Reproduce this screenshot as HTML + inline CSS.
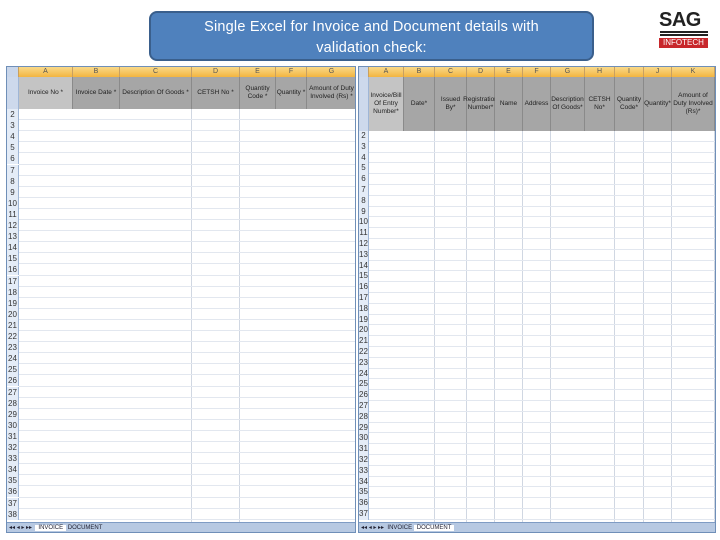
<!DOCTYPE html>
<html><head><meta charset="utf-8"><style>
*{margin:0;padding:0;box-sizing:border-box}
html,body{width:720px;height:540px;overflow:hidden}
body{background:#fff;position:relative;font-family:"Liberation Sans",sans-serif}
.a{position:absolute}
.title{left:149px;top:11px;width:445px;height:50px;background:#4f81bd;border:2px solid #3a5f8c;border-radius:8px;color:#fff;font-size:14.5px;text-align:center;line-height:21px;padding-top:4px;letter-spacing:.2px}
.sheet{border:1px solid #6f8fb8;background:#fff;overflow:hidden}
.colh{background:linear-gradient(#f9d98a,#f3b540);font-size:7px;color:#555;text-align:center;line-height:10px;border-right:1px solid #c9a060;height:10px}
.hd{background:#a6a6a6;font-size:6.5px;color:#222;display:flex;align-items:center;justify-content:center;text-align:center;border-right:1px solid #8a8a8a;line-height:8px}
.rn{background:#e4ecf7;border-right:1px solid #9fb6d6;font-size:8px;color:#333;text-align:center}
.tabs{background:#b7c9e2;border-top:1px solid #7f9cc4;font-size:6px;color:#223;line-height:10px}
</style></head><body>
<div class="a title">Single Excel for Invoice and Document details with<br>validation check:</div>
<div class="a" style="left:659px;top:9px;font:bold 20px 'Liberation Sans',sans-serif;color:#222;letter-spacing:-.5px">SAG</div>
<div class="a" style="left:660px;top:31px;width:48px;height:2px;background:#222"></div>
<div class="a" style="left:660px;top:34px;width:48px;height:2px;background:#222"></div>
<div class="a" style="left:659px;top:38px;width:49px;height:10px;background:#c8282c;color:#fff;font-size:8px;line-height:10px;text-align:center">INFOTECH</div>

<div id="L" class="a sheet" style="left:6px;top:66px;width:350px;height:467px"></div>
<div id="R" class="a sheet" style="left:358px;top:66px;width:358px;height:467px"></div>
<script>
function build(id,cols,rnw,hh,rh,nrows,tabtxt){
 var s=document.getElementById(id),h='';
 h+='<div class="a colh" style="left:0;top:0;width:'+rnw+'px;background:#c9d6ea"></div>';
 h+='<div class="a rn" style="left:0;top:10px;width:'+rnw+'px;height:'+hh+'px;background:#cdd9ec"></div>';
 var x=rnw;
 cols.forEach(function(c,i){
  h+='<div class="a colh" style="left:'+x+'px;top:0;width:'+c[0]+'px">'+c[1]+'</div>';
  h+='<div class="a hd" style="left:'+x+'px;top:10px;width:'+c[0]+'px;height:'+hh+'px;'+(i==0?'background:#c4c4c4':'')+'">'+c[2]+'</div>';
  if(c[3]) h+='<div class="a" style="left:'+(x+c[0]-1)+'px;top:'+(10+hh)+'px;width:1px;height:'+(455-10-hh)+'px;background:#d0d7e2"></div>';
  x+=c[0];
 });
 var y=10+hh;
 for(var r=2;r<nrows+2;r++){
  if(y+rh>455) break;
  h+='<div class="a rn" style="left:0;top:'+y+'px;width:'+rnw+'px;height:'+rh+'px;line-height:'+rh+'px">'+r+'</div>';
  h+='<div class="a" style="left:'+rnw+'px;top:'+(y+rh-1)+'px;width:'+(x-rnw)+'px;height:1px;background:#e2e7ef"></div>';
  y+=rh;
 }
 h+='<div class="a tabs" style="left:0;top:455px;width:100%;height:12px;padding-left:2px">◂◂ ◂ ▸ ▸▸ &nbsp;'+tabtxt+'</div>';
 s.innerHTML=h;
}
build('L',[[54,'A','Invoice No *',0],[47,'B','Invoice Date *',0],[72,'C','Description Of Goods *',1],[48,'D','CETSH No *',1],[36,'E','Quantity Code *',0],[31,'F','Quantity *',0],[50,'G','Amount of Duty Involved (Rs) *',1]],12,32,11.1,37,'<span style="background:#fff;padding:0 3px">INVOICE</span> DOCUMENT');
build('R',[[35,'A','Invoice/Bill Of Entry Number*',0],[31,'B','Date*',1],[32,'C','Issued By*',1],[28,'D','Registration Number*',1],[28,'E','Name',1],[28,'F','Address',1],[34,'G','Description Of Goods*',0],[30,'H','CETSH No*',1],[29,'I','Quantity Code*',1],[28,'J','Quantity*',1],[43,'K','Amount of Duty Involved (Rs)*',1]],10,54,10.8,36,'INVOICE <span style="background:#fff;padding:0 3px">DOCUMENT</span>');
</script>
</body></html>
